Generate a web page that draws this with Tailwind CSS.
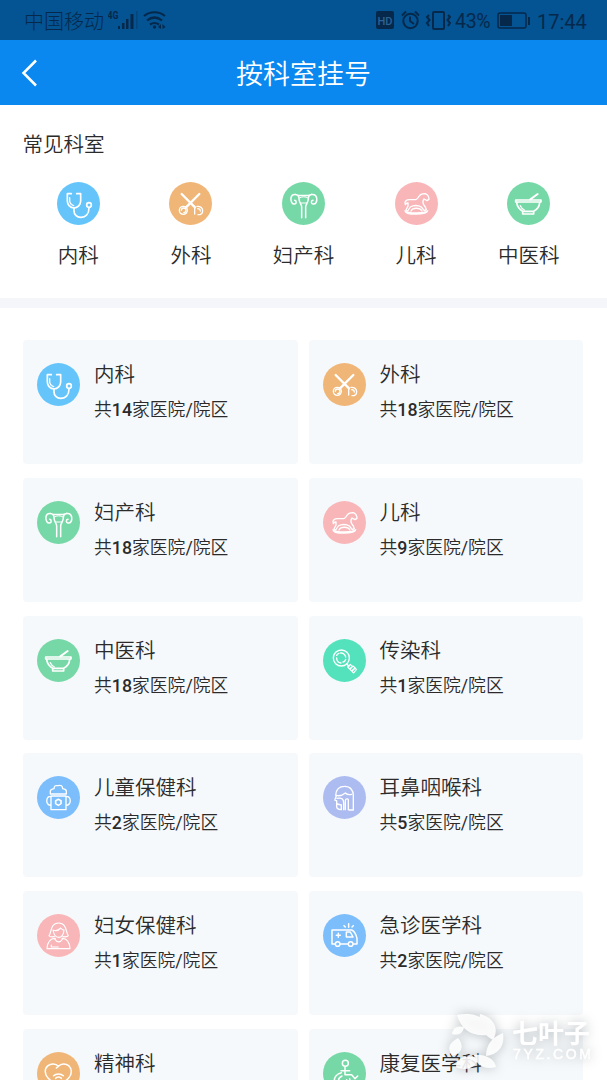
<!DOCTYPE html>
<html lang="zh">
<head>
<meta charset="utf-8">
<title>按科室挂号</title>
<script src="https://cdn.jsdelivr.net/npm/@tailwindcss/browser@4"></script>
</head>
<body class="w-[607px] h-[1080px] overflow-hidden relative bg-white text-[#2b2b2b] font-[350] font-['Roboto','Noto_Sans_CJK_SC',sans-serif]">
<svg class="hidden">
  <g id="stetho" stroke-width="5"><path d="M43 35H31v22a20 21 0 0 0 40 0V35H59"/><path d="M38 47v8c0 9 5 14 12 16" stroke-width="4"/><path d="M51 78v8c0 11 8 20 20 20 16 0 25-12 25-29"/><circle cx="96" cy="69" r="7"/></g>
  <g id="scissors"><path d="M38 36L78 76M91 36L51 76" stroke-width="7"/><circle cx="43" cy="85" r="12" stroke-width="4"/><path d="M37 85a7 7 0 1 1 7 7M77 78v18M84 73c10-1 17 5 17 13 0 7-5 12-14 12M86 80c6 0 8 3 8 7" stroke-width="4"/></g>
  <g id="uterus" stroke-width="4.500"><path d="M59 107V74c0-7-8-12-8-24 0-16-22-17-24-2-2 11 4 19 11 18 6-1 6-10 0-11M71 107V74c0-7 8-12 8-24 0-16 22-17 25-2 2 11-3 19-11 18-6-1-7-10 0-11M40 37c10 5 38 5 49 0"/><path d="M52 48c7-5 19-5 26 0M56 63h18" stroke-width="3"/></g>
  <g id="horse" stroke-width="4"><path d="M30 61c2-6 8-9 16-8h16c7 0 7-10 15-15 5-3 9-3 14-3 7 3 11 10 11 17l-6 4-9-5c-4 5-4 11-1 17l5 7 3 8-6 3-9-11c-9-6-24-6-33 0L38 87l-5-3 6-12v-9c-4-1-6 3-8 5z"/><path d="M30 86c0 14 66 14 68 0-3 6-14 7-34 7s-29-1-34-7zM48 87c5-11 27-11 33 0" stroke-width="4"/></g>
  <g id="bowl" stroke-width="5"><path d="M26 54H102v6H26zM29 62c2 13 9 21 18 26v8H80v-8c10-5 17-13 18-26M49 88H80"/><path d="M70 52L92 36" stroke-width="6"/><path d="M40 71c3 7 6 10 12 13" stroke-width="4"/></g>
  <g id="magnifier" stroke-width="4"><circle cx="55" cy="57" r="24"/><path d="M41 57c0 8 5 14 13 15M53 42c7-1 14 5 15 12M60 69c4-1 7-4 8-8M41 49c2-3 4-5 7-6M71 75l7 7"/><path d="M82 76l-8 8 6 6 8-8zM90 81l-9 10 5 5 10-10zM97 87L87 97l5 5 8-10z" stroke-width="3.500"/></g>
  <g id="bottle" stroke-width="4"><path d="M40 54v-8c0-6 4-7 11-8 1-10 5-10 12-9 10-2 13 0 14 9 8 1 11 3 11 8v8zM42 60H87v41H42zM42 61c-17-2-17 28 0 27M87 61c17-2 17 28 0 27"/><path d="M64 70l8 4v9l-8 5-8-5v-9z" stroke-width="5"/></g>
  <g id="head" stroke-width="4"><path d="M38 58c1-17 11-27 27-27 17 0 26 12 26 27v44H78M40 60c-2 6-5 10-4 13l5 1v18c0 6 5 8 14 9V87l-12-3"/><path d="M40 58c12 4 21-2 27-7 5 5 12 6 19 4M42 67c14-3 20 2 20 14v20M76 101V72c0-5-9-5-9 2v27"/></g>
  <g id="woman" stroke-width="3.500"><path d="M52 68C44 69 38 69 36 65 44 57 39 27 65 27s21 31 29 38c-3 4-9 4-16 3M48 48c8 4 17 1 23-6 3 4 7 6 10 6-1 12-5 22-16 22S50 60 48 48zM55 73c-18 0-24 13-25 31H99c-1-18-7-31-24-31M54 76c6 10 17 10 22 0M43 93v6H64"/></g>
  <g id="ambulance" stroke-width="4.500"><path d="M35 90H27V48H68M68 48H86c8 3 14 17 16 25V90H92M52 90H74M46 58v12M40 64H52M70 54H82l8 15H70z"/><circle cx="44" cy="90" r="7"/><circle cx="83" cy="90" r="7"/><path d="M77 40v-11M67 39l-4-4M87 39l4-4"/></g>
  <g id="heart" stroke-width="4.500"><path d="M64 43c-8-9-22-9-31-2-11 9-11 26 0 37l31 30 31-30c11-11 10-28 0-37-9-7-22-7-31 2l-6 5M56 79c4-5 13-5 17 0M50 71c7-7 22-7 29 0"/></g>
  <g id="wheelchair" stroke-width="4.500"><circle cx="67" cy="34" r="9"/><path d="M66 44v24H86l10 12 8-8M54 56h26M55 62c-31 9-26 46 4 43 17-2 23-13 21-25M57 72c-16 8-12 25 2 25 8 0 12-6 12-14"/></g>
</svg>

<header>
  <div class="h-10 bg-[#045392] text-[#06294b] flex items-center pl-6 pr-5 text-[20px] leading-10">
    <span class="w-20 pt-[3px] font-light">中国移动</span>
    <svg class="ml-1 w-[60px] h-10 shrink-0" viewBox="0 0 60 40" fill="currentColor">
      <text x="-.5" y="18.500" font-size="10" font-weight="700" font-family="Roboto" textLength="11" lengthAdjust="spacingAndGlyphs">4G</text>
      <path d="M10 26h2v3h-2zM14 23h2.500v6h-2.500zM18 19h2.500v10h-2.500zM22.500 14h3v15h-3z"/><path d="M28 11h1.500v18h-1.500z" opacity=".3"/>
      <g fill="none" stroke="currentColor" stroke-width="2.200"><path d="M36 16c6-5 15-5 21 0M39 20.500c5-4 10-4 15 0M42 24.500c3-2 6-2 9 0"/></g><circle cx="46.500" cy="27" r="1.700"/><path d="M50 27l3-3v5zM57.500 27l-3-3v5z"/>
    </svg>
    <svg class="ml-auto mr-1 w-[76px] h-10 shrink-0" viewBox="0 0 76 40" fill="none" stroke="currentColor" stroke-width="2">
      <rect x="1" y="11" width="18" height="18" rx="2" fill="currentColor" stroke="none"/><text x="2.500" y="24.800" font-size="11" font-weight="500" font-family="Roboto" fill="#2c6397" stroke="none">HD</text>
      <circle cx="35.500" cy="21" r="7.200"/><path d="M35 16.500v4.500l4 3M27 15.500l4-4M44 15.500l-4-4"/>
      <rect x="58" y="12" width="11" height="17" rx="1"/><path d="M54 15l-2 2 2.500 3-2.500 3 2 3M73 15l2 2-2.500 3 2.500 3-2 3"/>
    </svg>
    <span class="w-[37px] text-[19.500px] tracking-[-.3px] pt-[3px] font-normal">43%</span>
    <svg class="ml-[5px] w-[35px] h-10 shrink-0" viewBox="0 0 35 40"><rect x="1" y="13" width="28" height="15" rx="2" fill="none" stroke="currentColor" stroke-width="1.500"/><path d="M3 15h12v11H3zM31 17h2v8h-2z" fill="currentColor"/></svg>
    <span class="ml-[5px] w-[50px] text-[20px] pt-[3px] font-normal">17:44</span>
  </div>
  <div class="h-[65px] bg-[#0a88ef] grid grid-cols-[1fr_auto_1fr] items-center px-[21px]">
    <svg class="w-4 h-7" viewBox="0 0 16 28" fill="none" stroke="#fff" stroke-width="2.500"><path d="M15 1.500L2.500 14 15 26.500"/></svg>
    <h1 class="pt-[5px] text-[27px] leading-[60px] text-white">按科室挂号</h1>
  </div>
</header>

<section class="h-[193px] pt-[25px]">
  <h2 class="ml-[22.500px] text-[20.500px] leading-[30px]">常见科室</h2>
  <div id="common" class="mt-[22px] px-[22px] grid grid-cols-5"></div>
</section>
<div class="h-[10px] bg-[#f5f6fa]"></div>
<main id="departments" class="pt-[32px] px-[23px] grid grid-cols-[275px_274.500px] gap-x-[10.500px] gap-y-[13.750px]"></main>

<div class="absolute left-[446px] top-[1005px] w-[161px] h-[75px]">
  <svg class="w-full h-full overflow-visible drop-shadow-[0_0_6px_rgba(80,90,100,0.42)]" viewBox="0 0 161 75" fill="#fff">
    <path d="M11 10c14-3 31 0 36 19-18 4-31-2-36-19zM34 9c13 3 20 14 13 26-9-4-14-15-13-26zM57 28c2 13-4 21-17 23 0-12 7-19 17-23zM6 29c1-6 5-9 12-7-1 6-5 9-12 7zM6 51c-5-8-3-13 6-18 6 7 5 15-6 18zM10 62c0-9 10-13 22-9-1 9-11 14-22 9zM28 50c11-1 21 4 22 12-10 3-20-1-22-12z" opacity=".88"/>
    <text x="66" y="37.500" font-family="Noto Sans CJK SC,sans-serif" font-size="26" font-weight="700">七叶子</text>
    <text x="67" y="54" font-family="Liberation Sans,sans-serif" font-size="14" textLength="78" stroke="#fff" stroke-width=".4">7YZ.COM</text>
  </svg>
</div>

<script>
const icon = (id, color) => `<svg class="size-[43px] shrink-0 rounded-full" viewBox="0 0 129 129" style="background:${color}" fill="none" stroke="#fff" stroke-linecap="round" stroke-linejoin="round"><use href="#${id}"/></svg>`;
const items = [
  ['内科',14,'stetho','#65c5fb'],['外科',18,'scissors','#f0b678'],
  ['妇产科',18,'uterus','#77d8a7'],['儿科',9,'horse','#f8b6b9'],
  ['中医科',18,'bowl','#77d8a7'],['传染科',1,'magnifier','#54e2bd'],
  ['儿童保健科',2,'bottle','#7cbdfc'],['耳鼻咽喉科',5,'head','#acbcf1'],
  ['妇女保健科',1,'woman','#f8b6b9'],['急诊医学科',2,'ambulance','#7cbdfc'],
  ['精神科',null,'heart','#f0b678'],['康复医学科',null,'wheelchair','#77d8a7']
];
document.getElementById('common').innerHTML = items.slice(0,5).map(([name,,id,color]) =>
  `<div class="flex flex-col items-center">${icon(id,color)}<span class="mt-[16px] text-[20.500px] leading-[30px]">${name}</span></div>`).join('');
document.getElementById('departments').innerHTML = items.map(([name,n,id,color]) =>
  `<article class="${n ? 'h-[124px] rounded-[4px]' : 'h-[51px] rounded-t-[4px] overflow-hidden'} bg-[#f6f9fb] pl-[14px] pt-[20px] flex gap-[14px]"><div class="pt-[3px]">${icon(id,color)}</div><div><h3 class="text-[20.500px] leading-[30px]">${name}</h3>${n ? `<p class="mt-[5px] text-[17.800px] leading-[30px] whitespace-nowrap">共<b class="font-medium">${n}</b>家医院<span class="font-normal">/</span>院区</p>` : ''}</div></article>`).join('');
</script>
</body>
</html>
